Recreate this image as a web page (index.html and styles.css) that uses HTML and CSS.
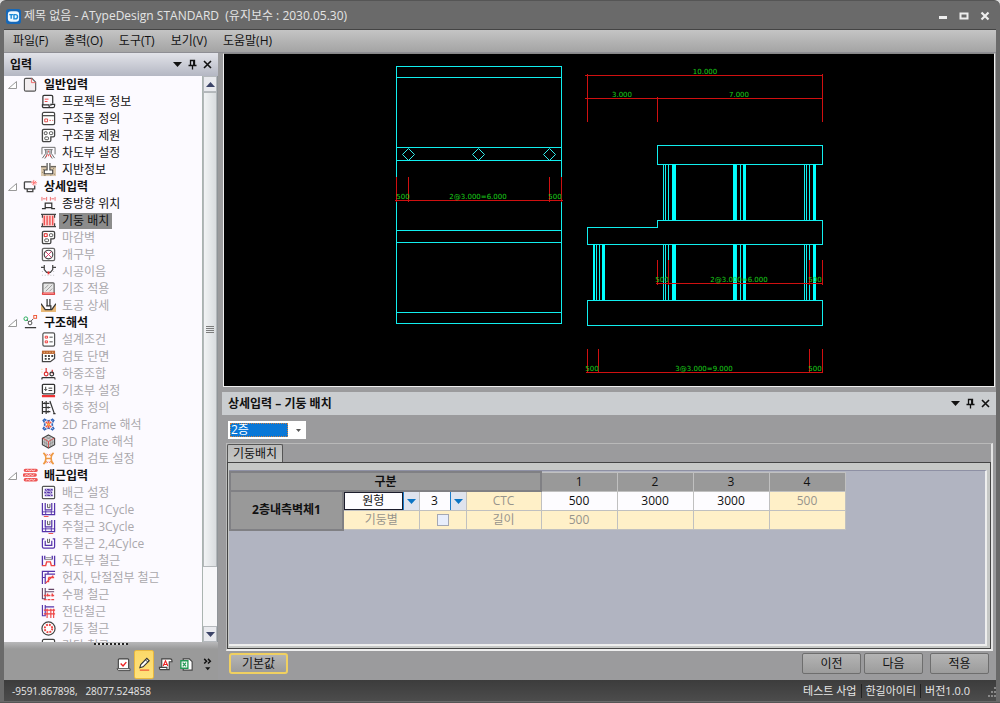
FILE: index.html
```
<!DOCTYPE html>
<html lang="ko">
<head>
  <meta charset="utf-8">
  <title>제목 없음 - ATypeDesign STANDARD</title>
  <link rel="stylesheet" href="styles.css">
</head>
<body>
  <!-- icon set -->
  <svg class="defs" aria-hidden="true">
    <symbol id="i-open" viewBox="0 0 9 9"><path d="M.5 8.500L8.500 1.500V8.500Z" fill="#fff" stroke="#999"/></symbol>
    <symbol id="i-down" viewBox="0 0 9 5"><path d="M0 0H9L4.500 5Z" fill="currentColor"/></symbol>
    <symbol id="i-pin" viewBox="0 0 9 11"><path d="M2.500 6V1.500H6.500V6M5.700 1.500V6M.5 6.500H8.500M4.500 7V10.500" fill="none" stroke="currentColor" stroke-width="1.300"/></symbol>
    <symbol id="i-close" viewBox="0 0 9 9"><path d="M1 1L8 8M8 1L1 8" stroke="currentColor" stroke-width="1.600"/></symbol>

    <symbol id="i-page" viewBox="0 0 16 16"><path d="M1.500 3Q1.500 1.500 3 1.500H9.500L13.500 5.500V13.500Q13.500 15 12 15H3Q1.500 15 1.500 13.500Z" fill="#f3eef0" stroke="#555" stroke-width="1.200"/><path d="M9 1.500V6H13.500" fill="none" stroke="#e66"/></symbol>
    <symbol id="i-detail" viewBox="0 0 16 16"><path d="M9 3H2.500Q1.500 3 1.500 4V9.500Q1.500 10.500 2.500 10.500H12.500V7M4.500 11V13.500H10.500V11" fill="none" stroke="#444" stroke-width="1.400"/><path d="M11.500 1V7M8.500 4H15M10 2L14 6M14 2L10 6" stroke="#f77"/></symbol>
    <symbol id="i-analysis" viewBox="0 0 16 16"><path d="M4 5L7 8L11 4" fill="none" stroke="#555"/><circle cx="3" cy="4" r="2" fill="none" stroke="#2a5"/><circle cx="7.500" cy="8.500" r="2" fill="#fff" stroke="#444"/><rect x="11.500" y=".5" width="3" height="3" fill="none" stroke="#e53"/><path d="M2 13.500H14" stroke="#333" stroke-width="1.300"/></symbol>
    <symbol id="i-rebar" viewBox="0 0 16 16"><path d="M2.500 2.500H14M1.500 7.500H13M2.500 12.500H14" stroke="#e55" stroke-width="3.600" stroke-linecap="round"/><path d="M3 3L5 2L7 3L9 2L11 3L13 2M2 8L4 7L6 8L8 7L10 8L12 7M3 13L5 12L7 13L9 12L11 13L13 12" fill="none" stroke="#fff" stroke-width=".8"/></symbol>

    <symbol id="i-project" viewBox="0 0 16 16"><path d="M12.500 10V3Q12.500 1.500 11 1.500H3.500Q2 1.500 2 3V12M1.500 11.500H8.500Q8.500 14.500 10 14.500H3Q1.500 14.500 1.500 13ZM10 14.500H13Q14.500 14.500 14.500 12.500V11H10.500V12.500" fill="none" stroke="#333" stroke-width="1.300"/><path d="M4 5.500H8M4 8H7" stroke="#e44"/></symbol>
    <symbol id="i-define" viewBox="0 0 16 16"><rect x="1.500" y="1.500" width="13" height="13" rx="1.500" fill="#fff" stroke="#444" stroke-width="1.300"/><path d="M2 5H14" stroke="#444" stroke-width="1.300"/><path d="M4 8.500H7V11.500H4ZM9 10H10.500M12 10H13" fill="none" stroke="#d44"/></symbol>
    <symbol id="i-spec" viewBox="0 0 16 16"><path d="M1.500 3Q1.500 1.500 3 1.500H13Q14.500 1.500 14.500 3V8Q14.500 9.500 13 9.500H10.500V13Q10.500 14.500 9 14.500H3Q1.500 14.500 1.500 13Z" fill="#fff" stroke="#444" stroke-width="1.400"/><rect x="3.500" y="4" width="3" height="3" rx="1" fill="none" stroke="#444"/><rect x="9" y="4" width="3.500" height="3" rx="1" fill="none" stroke="#444"/><rect x="4" y="9.500" width="4" height="3" rx="1" fill="none" stroke="#444"/></symbol>
    <symbol id="i-finish" viewBox="0 0 16 16"><use href="#i-spec"/><rect x="3.500" y="4" width="3" height="3" fill="#fff" stroke="#e33"/></symbol>
    <symbol id="i-road" viewBox="0 0 16 16"><path d="M1 10V2.500H15V10M3.500 5H12.500M5 5V9L1.500 14M11 5V9L14.500 14M6.500 6V10L4 14.500M9.500 6V10L12 14.500" fill="none" stroke="#666"/><path d="M8 6V8M8 10V12M5.500 13L6.500 10M10.500 13L9.500 10" stroke="#e55"/></symbol>
    <symbol id="i-ground" viewBox="0 0 16 16"><path d="M0 4H16V15H0Z" fill="#dcc9ae"/><path d="M5.500 5H0M10.500 5H16M6.500 1V8.500H3.500V12.500H12.500V8.500H9.500V1" fill="#fff" stroke="#444" stroke-width="1.200"/><path d="M2 8H3M13 7H14M1 11H2M14 13H15M3 14H5M10 14H11" stroke="#875"/></symbol>
    <symbol id="i-length" viewBox="0 0 16 16"><path d="M1 13.500H4.500V7.500H11.500V13.500H15M4.500 12.500H11.500" fill="none" stroke="#333" stroke-width="1.300"/><path d="M1 1V5M6 1V5M10 1V5M15 1V5M2 3H5M11 3H14" stroke="#e66"/></symbol>
    <symbol id="i-column" viewBox="0 0 16 16"><path d="M1 2H15V14H1Z" fill="#fbd0d0"/><path d="M3.500 3V13M6.500 3V13M9.500 3V13M12.500 3V13" stroke="#e44" stroke-width="1.300"/><path d="M0 1.500H16M0 14.500H16M1.500 2V5M14.500 2V5M1.500 11V14M14.500 11V14" stroke="#444" stroke-width="1.300"/></symbol>
    <symbol id="i-opening" viewBox="0 0 16 16"><rect x="1.500" y="1.500" width="13" height="13" rx="1.500" fill="#fff" stroke="#666" stroke-width="1.400"/><circle cx="8" cy="8" r="4.600" fill="#fff" stroke="#444" stroke-width="1.200"/><path d="M5 5L11 11M11 5L5 11" stroke="#d36"/></symbol>
    <symbol id="i-joint" viewBox="0 0 16 16"><path d="M0 3.500H3.500V6L6 9H10L12.500 6V3.500H16M3.500 1V4M12.500 1V4" fill="none" stroke="#444" stroke-width="1.300"/><path d="M8 8V11" stroke="#e33" stroke-width="2"/><path d="M1 8H3M13 8H15M1 12H15" stroke="#bbb" stroke-dasharray="1 2"/></symbol>
    <symbol id="i-base" viewBox="0 0 16 16"><rect x="2" y="2" width="12" height="12" rx="1" fill="#e6e6e6" stroke="#555" stroke-width="1.200"/><path d="M4 8L8 4M5 11L12 4M9 11L12 8" stroke="#999"/><path d="M1 13.500H15" stroke="#e33" stroke-width="2.400"/><path d="M2 13.500H14" stroke="#faa" stroke-width=".8"/></symbol>
    <symbol id="i-earth" viewBox="0 0 16 16"><path d="M0 6L5 12H11L16 6V15H0Z" fill="#e9b878"/><path d="M0 6L4.500 12.500H11.500L16 6M6.500 1V8M9.500 1V8M5.500 8.500H10.500V12" fill="none" stroke="#333" stroke-width="1.300"/></symbol>
    <symbol id="i-cond" viewBox="0 0 16 16"><rect x="2" y="1" width="12.500" height="14" rx="1.500" fill="#fff" stroke="#555" stroke-width="1.300"/><path d="M4.500 4.500H7V6.500H4.500ZM4.500 9.500H7V11.500H4.500Z" fill="none" stroke="#e33"/><path d="M9 5.500H12.500M9 10.500H12.500" stroke="#444"/></symbol>
    <symbol id="i-section" viewBox="0 0 16 16"><path d="M1.500 5V13.500H10L14.500 10V5" fill="#fff" stroke="#444" stroke-width="1.300"/><path d="M1 3.500H15" stroke="#b63" stroke-width="3.500"/><path d="M4 7.500H13M4 10.500H11" stroke="#444" stroke-width="2" stroke-dasharray="2 1.500"/><path d="M3 3.500H13" stroke="#fd9" stroke-dasharray="1 2"/></symbol>
    <symbol id="i-combo" viewBox="0 0 16 16"><path d="M5.500 2V7M12 4V8" stroke="#d33" stroke-width="1.300"/><circle cx="5.500" cy="8.500" r="2" fill="none" stroke="#d33" stroke-width="1.300"/><circle cx="11.500" cy="8.500" r="2" fill="none" stroke="#333" stroke-width="1.300"/><path d="M1 14.500V13Q1 12.500 2 12.500H14Q15 12.500 15 14.500" fill="none" stroke="#333" stroke-width="1.300"/><path d="M1 3V9" stroke="#fb6" stroke-dasharray="1 2"/></symbol>
    <symbol id="i-found" viewBox="0 0 16 16"><rect x="1.500" y="1.500" width="13" height="10" rx="1" fill="#fff" stroke="#333" stroke-width="1.400"/><path d="M5 4V8M3.500 6.500L5 8L6.500 6.500M8 5.500H12M8 8H12" fill="none" stroke="#333"/><path d="M1 14H15" stroke="#e33" stroke-width="2.400"/></symbol>
    <symbol id="i-load" viewBox="0 0 16 16"><path d="M1.500 1V15M5.500 1V15M9.500 1L14 14M2 3.500H9M2 8H10M2 12.500H10M13 14.500H15.500" fill="none" stroke="#333" stroke-width="1.300"/><path d="M4 2.500L3 3.500L4 4.500M8 7L6.500 8L8 9M8 11.500L6.500 12.500L8 13.500" fill="none" stroke="#333"/></symbol>
    <symbol id="i-frame" viewBox="0 0 16 16"><path d="M2 3Q6 8 2 13M14 3Q10 8 14 13M3 2Q8 6 13 2M3 14Q8 10 13 14" fill="none" stroke="#36b" stroke-width="1.800" stroke-dasharray="3 1"/><path d="M5 5L11 11M11 5L5 11M8 4V12" stroke="#e54" stroke-width="1.400"/><circle cx="8" cy="8" r="1.500" fill="#fa4"/></symbol>
    <symbol id="i-plate" viewBox="0 0 16 16"><path d="M8 1L14.500 4.500V11.500L8 15L1.500 11.500V4.500Z" fill="#ccc" stroke="#444" stroke-width="1.200"/><path d="M2 4.500L8 8L14 4.500M8 8V14.500" fill="none" stroke="#d44"/><path d="M4 6V12M6 7V13M2 8L8 11.500L14 8M10 7V13M12 6V12M5 3L11 6M11 3L5 6" fill="none" stroke="#888" stroke-width=".7"/></symbol>
    <symbol id="i-review" viewBox="0 0 16 16"><path d="M2.500 2Q8 8 2.500 14M13.500 2Q8 8 13.500 14M3 2L6 5.500M13 2L10 5.500M3 14L6 10.500M13 14L10 10.500M6 8H10" fill="none" stroke="#e94" stroke-width="1.500"/><path d="M6 3Q8 6 10 3M6 13Q8 10 10 13" fill="none" stroke="#e55" stroke-dasharray="2 1"/></symbol>
    <symbol id="i-barset" viewBox="0 0 16 16"><rect x="1.500" y="1.500" width="13" height="13" rx="1" fill="#fff" stroke="#555" stroke-width="1.300"/><path d="M4 5H12.500M3.500 8H12M4 11H12.500" stroke="#53a" stroke-width="2"/><path d="M5 4L7 6M9 4L11 6M5 7L7 9M9 7L11 9M5 10L7 12M9 10L11 12" stroke="#fff" stroke-width=".7"/></symbol>
    <symbol id="i-cycle" viewBox="0 0 16 16"><path d="M1.500 1V13.500H14.500V1M4.500 1V8.500H11.500V1" fill="none" stroke="#53a" stroke-width="1.300"/><path d="M7 2V6H9.500V2" fill="none" stroke="#555"/></symbol>
    <symbol id="i-cycle1" viewBox="0 0 16 16"><use href="#i-cycle"/><path d="M5 9V13M11 9V13M1 10.500H15" stroke="#53a"/><path d="M3 15.500H8" stroke="#e44"/></symbol>
    <symbol id="i-cycle3" viewBox="0 0 16 16"><use href="#i-cycle"/><path d="M5 9V13M11 9V13M1 10.500H15" stroke="#53a"/><path d="M8 15.500H13" stroke="#e44"/></symbol>
    <symbol id="i-cycle2" viewBox="0 0 16 16"><path d="M3.500 3H1.500V11.500Q1.500 13 3 13H13Q14.500 13 14.500 11.500V3H12.500M4.500 5V10H11.500V5" fill="none" stroke="#53a" stroke-width="1.300"/><path d="M7 3V7H9V3" fill="none" stroke="#555"/></symbol>
    <symbol id="i-roadbar" viewBox="0 0 16 16"><path d="M1.500 3V13.500M14.500 3V13.500M4 3V7M12 3V7" stroke="#53a" stroke-width="1.400"/><path d="M5 5H11M4 7H12" stroke="#888"/><path d="M1 13.500H5L6 9.500H10L11 13.500H15" fill="none" stroke="#e44" stroke-width="1.500"/></symbol>
    <symbol id="i-haunch" viewBox="0 0 16 16"><path d="M1.500 15V1.500H15M4.500 15V4.500H15M7.500 2V5M2 8H5" fill="none" stroke="#53a" stroke-width="1.300"/><path d="M5 14L13 6M8 8H14M8 8V13" stroke="#e44" stroke-width="1.400"/></symbol>
    <symbol id="i-horiz" viewBox="0 0 16 16"><path d="M1.500 1V12.500H4.500V1M4.500 5H14M8 2.500H14" fill="none" stroke="#646" stroke-width="1.200"/><path d="M3 9H15M3 13.500H15M7 7V11M12 7V11" stroke="#e44" stroke-width="1.500" stroke-dasharray="3 1"/></symbol>
    <symbol id="i-shear" viewBox="0 0 16 16"><path d="M1.500 1V12.500H4.500V1M4.500 3H14" fill="none" stroke="#53a" stroke-width="1.200"/><path d="M3 6.500H15M3 10.500H15M6.500 5V15M10.500 5V15M13.500 5V15" stroke="#e44" stroke-width="1.200"/></symbol>
    <symbol id="i-colbar" viewBox="0 0 16 16"><circle cx="8" cy="8" r="7" fill="#fff" stroke="#444" stroke-width="1.300"/><circle cx="8" cy="8" r="4" fill="none" stroke="#e44" stroke-width="2" stroke-dasharray="2 1.140"/></symbol>
    <symbol id="i-grip" viewBox="0 0 12 12"><path d="M10 2H12V4H10ZM7 6H9V8H7ZM10 6H12V8H10ZM4 10H6V12H4ZM7 10H9V12H7ZM10 10H12V12H10Z" fill="#888"/></symbol>
  </svg>

  <div class="window">
    <header class="titlebar">
      <svg class="logo" viewBox="0 0 16 16"><rect width="16" height="16" rx="3" fill="#1668b8"/><rect x="2" y="2.500" width="12" height="11" rx="3.500" fill="#eef8ff"/><path d="M3.500 6H7.500M5.500 6V10.500M8.500 6V10.500H10Q12.300 10.500 12.300 8.250Q12.300 6 10 6Z" fill="none" stroke="#1a8ad8" stroke-width="1.500"/></svg>
      <h1>제목 없음 - ATypeDesign STANDARD&nbsp; (유지보수 : 2030.05.30)</h1>
      <div class="window-buttons">
        <button type="button" aria-label="최소화"><svg viewBox="0 0 10 10"><path d="M1 6.500H9" stroke="#eee" stroke-width="3"/></svg></button>
        <button type="button" aria-label="최대화"><svg viewBox="0 0 10 10"><path d="M1.500 2.500H8.500V7.500H1.500Z" fill="none" stroke="#eee" stroke-width="2"/></svg></button>
        <button type="button" aria-label="닫기"><svg viewBox="0 0 10 10"><path d="M1.500 1.500L8.500 8.500M8.500 1.500L1.500 8.500" stroke="#eee" stroke-width="2.200"/></svg></button>
      </div>
    </header>

    <nav class="menubar">
      <button type="button">파일(F)</button>
      <button type="button">출력(O)</button>
      <button type="button">도구(T)</button>
      <button type="button">보기(V)</button>
      <button type="button">도움말(H)</button>
    </nav>

    <div class="workspace">
      <aside class="sidebar">
        <div class="panel-head">
          <h2>입력</h2>
          <button type="button" aria-label="메뉴"><svg class="ic-down"><use href="#i-down"/></svg></button>
          <button type="button" aria-label="고정"><svg class="ic-pin"><use href="#i-pin"/></svg></button>
          <button type="button" aria-label="닫기"><svg class="ic-close"><use href="#i-close"/></svg></button>
        </div>

        <div class="tree-wrap">
          <div class="tree">
            <button type="button" class="group"><svg class="open"><use href="#i-open"/></svg><svg><use href="#i-page"/></svg><span>일반입력</span></button>
            <button type="button" class="item"><svg><use href="#i-project"/></svg><span>프로젝트 정보</span></button>
            <button type="button" class="item"><svg><use href="#i-define"/></svg><span>구조물 정의</span></button>
            <button type="button" class="item"><svg><use href="#i-spec"/></svg><span>구조물 제원</span></button>
            <button type="button" class="item"><svg><use href="#i-road"/></svg><span>차도부 설정</span></button>
            <button type="button" class="item"><svg><use href="#i-ground"/></svg><span>지반정보</span></button>

            <button type="button" class="group"><svg class="open"><use href="#i-open"/></svg><svg><use href="#i-detail"/></svg><span>상세입력</span></button>
            <button type="button" class="item"><svg><use href="#i-length"/></svg><span>종방향 위치</span></button>
            <button type="button" class="item selected"><svg><use href="#i-column"/></svg><span>기둥 배치</span></button>
            <button type="button" class="item" disabled><svg><use href="#i-finish"/></svg><span>마감벽</span></button>
            <button type="button" class="item" disabled><svg><use href="#i-opening"/></svg><span>개구부</span></button>
            <button type="button" class="item" disabled><svg><use href="#i-joint"/></svg><span>시공이음</span></button>
            <button type="button" class="item" disabled><svg><use href="#i-base"/></svg><span>기조 적용</span></button>
            <button type="button" class="item" disabled><svg><use href="#i-earth"/></svg><span>토공 상세</span></button>

            <button type="button" class="group"><svg class="open"><use href="#i-open"/></svg><svg><use href="#i-analysis"/></svg><span>구조해석</span></button>
            <button type="button" class="item" disabled><svg><use href="#i-cond"/></svg><span>설계조건</span></button>
            <button type="button" class="item" disabled><svg><use href="#i-section"/></svg><span>검토 단면</span></button>
            <button type="button" class="item" disabled><svg><use href="#i-combo"/></svg><span>하중조합</span></button>
            <button type="button" class="item" disabled><svg><use href="#i-found"/></svg><span>기초부 설정</span></button>
            <button type="button" class="item" disabled><svg><use href="#i-load"/></svg><span>하중 정의</span></button>
            <button type="button" class="item" disabled><svg><use href="#i-frame"/></svg><span>2D Frame 해석</span></button>
            <button type="button" class="item" disabled><svg><use href="#i-plate"/></svg><span>3D Plate 해석</span></button>
            <button type="button" class="item" disabled><svg><use href="#i-review"/></svg><span>단면 검토 설정</span></button>

            <button type="button" class="group"><svg class="open"><use href="#i-open"/></svg><svg><use href="#i-rebar"/></svg><span>배근입력</span></button>
            <button type="button" class="item" disabled><svg><use href="#i-barset"/></svg><span>배근 설정</span></button>
            <button type="button" class="item" disabled><svg><use href="#i-cycle1"/></svg><span>주철근 1Cycle</span></button>
            <button type="button" class="item" disabled><svg><use href="#i-cycle3"/></svg><span>주철근 3Cycle</span></button>
            <button type="button" class="item" disabled><svg><use href="#i-cycle2"/></svg><span>주철근 2,4Cylce</span></button>
            <button type="button" class="item" disabled><svg><use href="#i-roadbar"/></svg><span>자도부 철근</span></button>
            <button type="button" class="item" disabled><svg><use href="#i-haunch"/></svg><span>헌지, 단절점부 철근</span></button>
            <button type="button" class="item" disabled><svg><use href="#i-horiz"/></svg><span>수평 철근</span></button>
            <button type="button" class="item" disabled><svg><use href="#i-shear"/></svg><span>전단철근</span></button>
            <button type="button" class="item" disabled><svg><use href="#i-colbar"/></svg><span>기둥 철근</span></button>
            <button type="button" class="item" disabled><svg><use href="#i-define"/></svg><span>간단 철근</span></button>
          </div>
          <div class="scrollbar">
            <button type="button" aria-label="위로"><svg class="flip"><use href="#i-down"/></svg></button>
            <div class="thumb"><i></i></div>
            <div class="track"></div>
            <button type="button" aria-label="아래로"><svg><use href="#i-down"/></svg></button>
          </div>
        </div>

        <div class="splitter"><i></i></div>
        <div class="side-tools">
          <button type="button" aria-label="검토"><svg viewBox="0 0 16 16"><path d="M2.500 12V3Q2.500 2 3.500 2H12.500Q13.500 2 13.500 3V12" fill="#fff" stroke="#444" stroke-width="1.200"/><path d="M1 12.500H15V14.500H2.500Z" fill="#fff" stroke="#444"/><path d="M5 7L7.500 9.500L11 5.500" fill="none" stroke="#e22" stroke-width="1.500"/></svg></button>
          <button type="button" class="active" aria-label="입력"><svg viewBox="0 0 16 16"><path d="M3 11.500L4 8L10.500 1.500L13 4L6.500 10.500Z" fill="#fff" stroke="#333" stroke-width="1.200"/><path d="M9 3L11.500 5.500" stroke="#333"/><path d="M3 14H13" stroke="#e53" stroke-width="1.300"/></svg></button>
          <button type="button" aria-label="도면"><svg viewBox="0 0 16 16"><path d="M4 11V2H13Q15 2 15 5H12V13.500H2.500Q1.500 13.500 1.500 11H9.500V14" fill="#fff" stroke="#444" stroke-width="1.200"/><path d="M5.500 9.500L8 4L10.500 9.500M6.500 8H9.500" fill="none" stroke="#e22" stroke-width="1.200"/></svg></button>
          <button type="button" aria-label="엑셀"><svg viewBox="0 0 16 16"><path d="M4.500 2H11L14 5V14H4.500Z" fill="#fff" stroke="#444" stroke-width="1.200"/><path d="M2 4H9.500V12H2Z" fill="#fff" stroke="#295" stroke-width="1.400"/><path d="M4 6L7.500 10M7.500 6L4 10" stroke="#295" stroke-width="1.400"/></svg></button>
          <button type="button" aria-label="더 보기"><svg viewBox="0 0 16 16"><path d="M4.500 2L7 4.500L4.500 7M8.500 2L11 4.500L8.500 7" fill="none" stroke="#111" stroke-width="1.600"/><path d="M5.500 11H11L8.250 14Z" fill="#111"/></svg></button>
        </div>
      </aside>

      <main class="content">
        <!-- plan on the left, elevation on the right -->
        <svg class="drawing" viewBox="0 0 770 332" role="img" aria-label="기둥 배치 도면">
          <g class="cad-line">
            <path d="M172.500 12.500H337.500V269.500H172.500ZM172.500 23.500H337.500M172.500 93.500H337.500M172.500 106.500H337.500M172.500 176.500H337.500M172.500 188.500H337.500M172.500 258.500H337.500"/>
            <path d="M433.500 91.500H598.500V110.500H433.500Z"/>
            <path d="M363.500 173.500H433.500V166.500H598.500V190.500H363.500Z"/>
            <path d="M363.500 246.500H598.500V271.500H363.500Z"/>
            <path d="M439.500 110V166M441.500 110V166M444.500 110V166M512.500 110V166M516.500 110V166M519.500 110V166M580.500 110V166M582.500 110V166M585.500 110V166"/>
            <path d="M372.500 190V246M375.500 190V246M439.500 190V246M441.500 190V246M444.500 190V246M512.500 190V246M516.500 190V246M519.500 190V246M580.500 190V246M582.500 190V246M585.500 190V246"/>
          </g>
          <g class="cad-fill">
            <path d="M448 110H452V166H448ZM509 110H512V166H509ZM519 110H522V166H519ZM589 110H592V166H589Z"/>
            <path d="M369 190H371V246H369ZM378 190H381V246H378ZM448 190H452V246H448ZM509 190H512V246H509ZM519 190H522V246H519ZM589 190H592V246H589Z"/>
          </g>
          <g class="cad-node">
            <path d="M178.500 100.500L184.500 94.500L190.500 100.500L184.500 106.500Z"/>
            <path d="M248.500 100.500L254.500 94.500L260.500 100.500L254.500 106.500Z"/>
            <path d="M319.500 100.500L325.500 94.500L331.500 100.500L325.500 106.500Z"/>
          </g>
          <g class="cad-dim">
            <path d="M171 146.500H339M172.500 123V148M184.500 123V148M325.500 123V148M337.500 123V148"/>
            <path d="M361 21.500H599M361 44.500H599M363.500 20V68M598.500 20V68M433.500 43V68"/>
            <path d="M432 229.500H599M433.500 206V231M444.500 206V231M585.500 206V231M598.500 206V231"/>
            <path d="M362 318.500H599M363.500 295V319M374.500 295V319M585.500 295V319M598.500 295V319"/>
          </g>
          <g class="cad-text">
            <text x="179" y="145">500</text>
            <text x="254" y="145">2@3.000=6.000</text>
            <text x="331" y="145">500</text>
            <text x="481" y="20">10.000</text>
            <text x="398" y="43">3.000</text>
            <text x="515" y="43">7.000</text>
            <text x="438" y="228">500</text>
            <text x="515" y="228">2@3.000=6.000</text>
            <text x="591" y="228">500</text>
            <text x="368" y="317">500</text>
            <text x="480" y="317">3@3.000=9.000</text>
            <text x="591" y="317">500</text>
          </g>
        </svg>

        <section class="detail">
          <div class="panel-head light">
            <h2>상세입력 – 기둥 배치</h2>
            <button type="button" aria-label="메뉴"><svg class="ic-down"><use href="#i-down"/></svg></button>
            <button type="button" aria-label="고정"><svg class="ic-pin"><use href="#i-pin"/></svg></button>
            <button type="button" aria-label="닫기"><svg class="ic-close"><use href="#i-close"/></svg></button>
          </div>

          <div class="floor">
            <div class="floor-box">
              <select aria-label="층"><option>2층</option></select>
              <svg><use href="#i-down"/></svg>
            </div>
          </div>

          <div class="tabs">
            <div class="tab-row"><button type="button" class="tab">기둥배치</button></div>
            <div class="tab-body">
              <div class="grid">
                <table>
                  <colgroup>
                    <col class="c-name"><col class="c-wide"><col class="c-narrow"><col class="c-mid"><col class="c-wide"><col class="c-wide"><col class="c-wide"><col class="c-wide">
                  </colgroup>
                  <thead>
                    <tr><th colspan="4" class="main">구분</th><th>1</th><th>2</th><th>3</th><th>4</th></tr>
                  </thead>
                  <tbody>
                    <tr>
                      <th rowspan="2" class="main">2층내측벽체1</th>
                      <td><div class="cell-select focus"><select aria-label="단면 형상"><option>원형</option></select><b><svg><use href="#i-down"/></svg></b></div></td>
                      <td><div class="cell-select"><select aria-label="기둥 수"><option>3</option></select><b><svg><use href="#i-down"/></svg></b></div></td>
                      <td class="locked">CTC</td>
                      <td>500</td><td>3000</td><td>3000</td><td class="locked">500</td>
                    </tr>
                    <tr>
                      <td class="locked"><label for="perColumn">기둥별</label></td>
                      <td class="locked"><input type="checkbox" id="perColumn"></td>
                      <td class="locked">길이</td>
                      <td class="locked">500</td><td class="locked"></td><td class="locked"></td><td class="locked"></td>
                    </tr>
                  </tbody>
                </table>
              </div>
            </div>
          </div>

          <div class="actions">
            <button type="button" class="default">기본값</button>
            <button type="button" class="push">이전</button>
            <button type="button">다음</button>
            <button type="button" class="apply">적용</button>
          </div>
        </section>
      </main>
    </div>

    <footer class="statusbar">
      <span class="coords">-9591.867898,&nbsp;&nbsp; 28077.524858</span>
      <span>테스트 사업</span>
      <span>한길아이티</span>
      <span>버전1.0.0</span>
      <svg class="grip"><use href="#i-grip"/></svg>
    </footer>
  </div>
</body>
</html>
```

FILE: styles.css
```
* {
  box-sizing: border-box;
}
body {
  margin: 0;
  background: #ddd;
  color: #111;
  font-family: "Open Sans", "Noto Sans CJK KR", sans-serif;
  font-size: 12px;
  line-height: 16px;
}
button, select {
  font: inherit;
  color: inherit;
  margin: 0;
  padding: 0;
  border: 0;
  background: none;
}
h1, h2 {
  margin: 0;
  font-size: 12px;
}
svg {
  display: block;
  flex: none;
}
.defs {
  position: absolute;
  width: 0;
  height: 0;
}
.window {
  display: flex;
  flex-direction: column;
  height: 100vh;
  padding: 0 4px 1px;
  background: #6a6a6a;
  border: 1px solid #555;
  border-width: 1px 0;
  border-radius: 6px 6px 0 0;
}

/* Title and menu */
.titlebar {
  display: flex;
  align-items: center;
  height: 28px;
  padding: 2px 6px 0 2px;
  color: #e4e4e4;
}
.logo {
  width: 15px;
  height: 15px;
  margin-right: 3px;
}
.titlebar h1 {
  flex: 1;
  font-weight: 400;
}
.window-buttons {
  display: flex;
  gap: 11px;
}
.window-buttons svg {
  width: 10px;
  height: 10px;
}
.menubar {
  display: flex;
  gap: 16px;
  height: 24px;
  padding: 0 9px;
  background: linear-gradient(#c4c4c4, #a4a4a4);
  border-top: 1px solid #444;
  border-bottom: 1px solid #8e8e94;
}

/* Left panel */
.workspace {
  display: flex;
  flex: 1;
  gap: 4px;
  min-height: 0;
  background: #9b9b9d;
}
.sidebar {
  display: flex;
  flex-direction: column;
  width: 214px;
}
.panel-head {
  display: flex;
  align-items: center;
  gap: 6px;
  flex: none;
  height: 23px;
  padding: 0 6px;
  background: linear-gradient(#e2e3e9, #b4b7c3);
}
.panel-head h2 {
  flex: 1;
}
.ic-down { width: 9px; height: 5px; }
.ic-pin { width: 9px; height: 11px; }
.ic-close { width: 9px; height: 9px; }
.tree-wrap {
  display: flex;
  flex: 1;
  min-height: 0;
  background: #fcfaff;
}
.tree {
  flex: 1;
  overflow: hidden;
}
.tree button {
  display: flex;
  align-items: center;
  width: 100%;
  height: 17px;
}
.tree svg {
  width: 15px;
  height: 15px;
}
.tree .open {
  width: 9px;
  height: 9px;
  margin-right: 6px;
}
.group {
  padding-left: 4px;
  font-weight: 700;
}
.group span {
  padding-left: 6px;
}
.tree .item {
  padding-left: 37px;
}
.item span {
  margin-left: 3px;
  padding: 0 3px;
}
.item.selected span {
  background: #8c8c8c;
}
.item:disabled {
  color: #aaa8ac;
}
.scrollbar {
  display: flex;
  flex-direction: column;
  width: 16px;
  background: #f7f7f9;
  border-left: 1px solid #aab4b0;
  border-right: 1px solid #8f9498;
}
.scrollbar button {
  display: flex;
  align-items: center;
  justify-content: center;
  height: 16px;
  background: #e9eaee;
  border: 1px solid #b5b9bd;
  color: #3c4468;
}
.scrollbar svg {
  width: 9px;
  height: 5px;
}
.scrollbar .flip {
  transform: rotate(180deg);
}
.thumb {
  display: flex;
  align-items: center;
  justify-content: center;
  flex: 89;
  background: linear-gradient(90deg, #f1f3f4, #d9dcdf);
  border: 1px solid #b3b7ba;
}
.thumb i {
  width: 8px;
  height: 8px;
  background: repeating-linear-gradient(#7c7c7c 0 1px, transparent 1px 2px);
}
.track {
  flex: 11;
}
.splitter {
  display: flex;
  justify-content: center;
  height: 7px;
  padding-top: 1px;
  background: linear-gradient(#b8b8ba, #9a9a9a);
}
.splitter i {
  width: 34px;
  height: 2px;
  background: repeating-linear-gradient(90deg, #222 0 2px, #ddd 2px 4px);
}
.side-tools {
  display: flex;
  align-items: center;
  justify-content: flex-end;
  gap: 1px;
  height: 31px;
  padding-right: 1px;
  background: #9a9a9a;
}
.side-tools button {
  display: flex;
  align-items: center;
  justify-content: center;
  width: 20px;
  height: 29px;
}
.side-tools svg {
  width: 15px;
  height: 15px;
}
.side-tools .active {
  background: linear-gradient(#fbd868, #ffe27c);
  border: 1px solid #e8b840;
  border-radius: 2px;
}

/* Drawing */
.content {
  display: flex;
  flex-direction: column;
  flex: 1;
  min-width: 0;
}
.drawing {
  flex: 1;
  min-height: 0;
  margin: 0 1px;
  background: #000;
  border: 1px solid #eee;
  border-top-color: #888;
}
.cad-line path {
  fill: none;
  stroke: #1ee;
  shape-rendering: crispEdges;
}
.cad-fill {
  fill: #0ff;
}
.cad-node {
  fill: none;
  stroke: #3ee;
}
.cad-dim {
  stroke: #d01010;
  shape-rendering: crispEdges;
}
.cad-text {
  fill: #1ad01a;
  font-family: "DejaVu Sans", sans-serif;
  font-size: 7px;
  text-anchor: middle;
}

/* Detail panel */
.detail {
  display: flex;
  flex-direction: column;
  height: 293px;
  padding-top: 5px;
}
.panel-head.light {
  background: #cacdd0;
}
.floor {
  padding: 6px 6px 4px;
}
.floor-box {
  display: flex;
  align-items: center;
  width: 78px;
  height: 18px;
  padding: 0 2px;
  background: #fff;
}
.floor-box select {
  appearance: none;
  width: 58px;
  height: 14px;
  line-height: 12px;
  color: #fff;
  background: #0a78d7;
  border: 1px dotted #d08040;
}
.floor-box svg {
  width: 5px;
  height: 3px;
  margin-left: 8px;
  color: #555;
}
.tabs {
  display: flex;
  flex-direction: column;
  flex: 1;
  min-height: 0;
  margin: 0 3px 0 4px;
  border: 1px solid #b9b9b9;
  border-right: 2px solid #e4e4e4;
  border-bottom: 2px solid #eee;
}
.tab-row {
  height: 18px;
}
.tab {
  height: 19px;
  padding: 0 5px;
  background: linear-gradient(#bbb, #c6c8c6);
  border: 1px solid #555;
  border-bottom: 0;
  border-radius: 2px 2px 0 0;
}
.tab-body {
  display: flex;
  flex: 1;
  min-height: 0;
  padding: 7px 3px 2px 1px;
  background: #c6c8c6;
  border: 1px solid #444;
}
.grid {
  flex: 1;
  background: #b1b4c1;
  border-top: 1px solid #8e90a4;
  border-right: 2px solid #eee;
  border-bottom: 2px solid #eee;
}
.grid table {
  table-layout: fixed;
  width: 615px;
  border-collapse: collapse;
}
.c-name { width: 113px; }
.c-wide { width: 76px; }
.c-mid { width: 75px; }
.c-narrow { width: 47px; }
.grid tr {
  height: 19px;
}
.grid th, .grid td {
  height: 19px;
  padding: 0;
  border: 1px solid #c0c0c0;
  background: #fdfcff;
  font-weight: 400;
  text-align: center;
  line-height: 16px;
}
.grid th {
  background: #999;
}
.grid th.main {
  border: 2px solid #808084;
  font-weight: 700;
}
.grid td.locked {
  background: #fff0c8;
  color: #97948c;
}
.cell-select {
  display: flex;
  height: 18px;
}
.cell-select select {
  appearance: none;
  flex: 1;
  min-width: 0;
  text-align: center;
}
.cell-select.focus select {
  border: 1px solid #1c1c2c;
}
.cell-select b {
  display: flex;
  align-items: center;
  justify-content: center;
  width: 16px;
  background: #dfe3ee;
  border-left: 1px solid #1a7ac8;
  color: #0b74c4;
}
.cell-select svg {
  width: 9px;
  height: 5px;
}
.grid input {
  appearance: none;
  display: block;
  width: 12px;
  height: 12px;
  margin: 0 auto;
  background: #e8eefc;
  border: 1px solid #a4a8b4;
}
.actions {
  display: flex;
  gap: 3px;
  padding: 2px 7px 6px;
}
.actions button {
  width: 59px;
  height: 21px;
  background: linear-gradient(#b4b4b4, #9c9c9c);
  border: 1px solid #6e6e6e;
  border-radius: 2px;
}
.actions .default {
  border: 2px solid #f0d060;
  border-radius: 3px;
}
.actions .push {
  margin-left: auto;
}
.actions .apply {
  margin-left: 4px;
}

/* Status bar */
.statusbar {
  display: flex;
  align-items: center;
  height: 21px;
  padding-left: 8px;
  background: linear-gradient(#3c3c3c, #4c4c4c);
  color: #e6e6e6;
  font-size: 11px;
}
.statusbar span {
  padding-right: 4px;
  margin-right: 4px;
  border-right: 1px solid #222;
  line-height: 14px;
}
.statusbar .coords {
  flex: 1;
  border: 0;
  font-size: 10px;
}
.statusbar span:nth-of-type(4) {
  border: 0;
}
.grip {
  width: 12px;
  height: 12px;
  margin-left: 6px;
}
```
